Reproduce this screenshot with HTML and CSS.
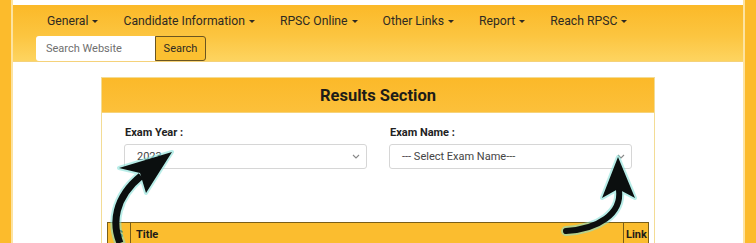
FILE: index.html
```html
<!DOCTYPE html>
<html>
<head>
<meta charset="utf-8">
<link rel="stylesheet" href="styles.css">
</head>
<body>
<div class="page">
  <nav class="navbar">
    <ul class="menu">
      <li>General <span class="caret"></span></li>
      <li>Candidate Information <span class="caret"></span></li>
      <li>RPSC Online <span class="caret"></span></li>
      <li>Other Links <span class="caret"></span></li>
      <li>Report <span class="caret"></span></li>
      <li>Reach RPSC <span class="caret"></span></li>
    </ul>
    <form class="search">
      <div class="search-input">Search Website</div>
      <div class="search-btn">Search</div>
    </form>
  </nav>

  <section class="panel">
    <div class="panel-head">Results Section</div>
    <div class="panel-body">
      <div class="fields">
        <div class="field">
          <div class="label">Exam Year :</div>
          <div class="select"><span>2023</span>
            <svg class="chev" width="8" height="5" viewBox="0 0 8 5"><path d="M1 1 L4 4 L7 1" fill="none" stroke="#888" stroke-width="1.1"/></svg>
          </div>
        </div>
        <div class="field">
          <div class="label">Exam Name :</div>
          <div class="select"><span>--- Select Exam Name---</span>
            <svg class="chev" width="8" height="5" viewBox="0 0 8 5"><path d="M1 1 L4 4 L7 1" fill="none" stroke="#888" stroke-width="1.1"/></svg>
          </div>
        </div>
      </div>
      <div class="table">
        <div class="th th-sn">S</div>
        <div class="th th-title">Title</div>
        <div class="th th-link">Link</div>
      </div>
    </div>
  </section>
</div>

<svg class="arrows" width="756" height="243" viewBox="0 0 756 243">
  <g class="glow">
    <path d="M120 243 C 112 224, 114 198, 141 176" fill="none" stroke="#7fe0d6" stroke-width="11" stroke-linecap="round"/>
    <polygon points="172,152 119,168 140,173 146,193" fill="#7fe0d6" stroke="#7fe0d6" stroke-width="4" stroke-linejoin="round"/>
    <path d="M566 231 C 598 229, 622 214, 619 190" fill="none" stroke="#7fe0d6" stroke-width="10" stroke-linecap="round"/>
    <polygon points="618,157 602,198 618,189 635,198" fill="#7fe0d6" stroke="#7fe0d6" stroke-width="4" stroke-linejoin="round"/>
  </g>
  <path d="M120 243 C 112 224, 114 198, 141 176" fill="none" stroke="#0b0f0f" stroke-width="7"/>
  <polygon points="172,152 119,168 140,173 146,193" fill="#0b0f0f"/>
  <path d="M566 231 C 598 229, 622 214, 619 190" fill="none" stroke="#0b0f0f" stroke-width="6" stroke-linecap="round"/>
  <polygon points="618,157 602,198 618,189 635,198" fill="#0b0f0f"/>
</svg>
</body>
</html>
```

FILE: styles.css
```css
html, body {
  margin: 0;
  padding: 0;
}
body {
  background: #fcbb2c;
  font-family: Roboto, "Liberation Sans", Arial, sans-serif;
  width: 756px;
  height: 243px;
  overflow: hidden;
  position: relative;
}
.page {
  margin: 0 11px 0 11px;
  height: 243px;
  background: #fff;
  border-left: 2px solid #fde3a0;
  border-right: 2px solid #fde3a0;
  padding-top: 5px;
  box-sizing: border-box;
}
.navbar {
  height: 57px;
  background: linear-gradient(#fbb928, #fcc540 55%, #fdd460);
  box-sizing: border-box;
  padding: 6px 0 0 34px;
  border-bottom: 1px solid #f5d27a;
}
.menu {
  list-style: none;
  margin: 0;
  padding: 0;
  display: flex;
  gap: 25px;
  height: 19px;
  align-items: center;
}
.menu li {
  font-size: 12.2px;
  color: #2e2a22;
  white-space: nowrap;
}
.caret {
  display: inline-block;
  width: 0;
  height: 0;
  border-left: 3.5px solid transparent;
  border-right: 3.5px solid transparent;
  border-top: 3.5px solid #2e2a22;
  vertical-align: middle;
  margin-left: 1px;
}
.search {
  display: flex;
  margin: 6px 0 0 -11px;
  height: 25px;
}
.search-input {
  width: 119px;
  background: #fff;
  font-size: 11px;
  color: #6f6f6f;
  padding-left: 10px;
  box-sizing: border-box;
  display: flex;
  align-items: center;
  border-radius: 3px 0 0 3px;
}
.search-btn {
  width: 51px;
  box-sizing: border-box;
  border: 1px solid #6b5520;
  border-radius: 0 3px 3px 0;
  background: #fbc031;
  font-size: 11px;
  color: #2e2a22;
  display: flex;
  align-items: center;
  justify-content: center;
}
.panel {
  width: 554px;
  margin: 15px auto 0 auto;
  border: 1px solid #f3dc95;
  border-bottom: none;
  box-sizing: border-box;
  height: 170px;
}
.panel-head {
  height: 34px;
  background: linear-gradient(#fbb929, #fcc03a);
  font-weight: 700;
  font-size: 16.5px;
  color: #1e1c18;
  display: flex;
  align-items: center;
  justify-content: center;
  border-bottom: 1px solid #f6d37a;
}
.panel-body {
  padding: 13px 0 0 0;
}
.fields {
  display: flex;
  gap: 22px;
  padding: 0 22px;
}
.field {
  width: 243px;
}
.label {
  font-size: 11px;
  font-weight: 700;
  color: #222;
  padding-left: 1px;
  height: 18px;
  line-height: 14px;
}
.select {
  height: 25px;
  border: 1px solid #d6d6d6;
  border-radius: 3px;
  box-sizing: border-box;
  display: flex;
  align-items: center;
  justify-content: space-between;
  padding: 0 6px 0 12px;
  font-size: 11px;
  color: #444;
}
.chev {
  display: block;
}
.table {
  display: flex;
  margin: 53px 5px 0 5px;
  height: 30px;
  border-top: 1px solid #7a5e18;
  border-left: 1px solid #7a5e18;
  background: #fbbd2f;
}
.th {
  font-size: 11px;
  font-weight: 700;
  color: #1e1c18;
  padding-top: 5px;
  box-sizing: border-box;
}
.th-sn {
  width: 23px;
  border-right: 1px solid #7a5e18;
  padding-left: 8px;
}
.th-title {
  flex: 1;
  padding-left: 5px;
}
.th-link {
  width: 26px;
  border-left: 1px solid #7a5e18;
  border-right: 1px solid #7a5e18;
  padding-left: 2px;
}
.arrows {
  position: absolute;
  left: 0;
  top: 0;
  pointer-events: none;
}
.glow {
  opacity: 0.55;
}
```
